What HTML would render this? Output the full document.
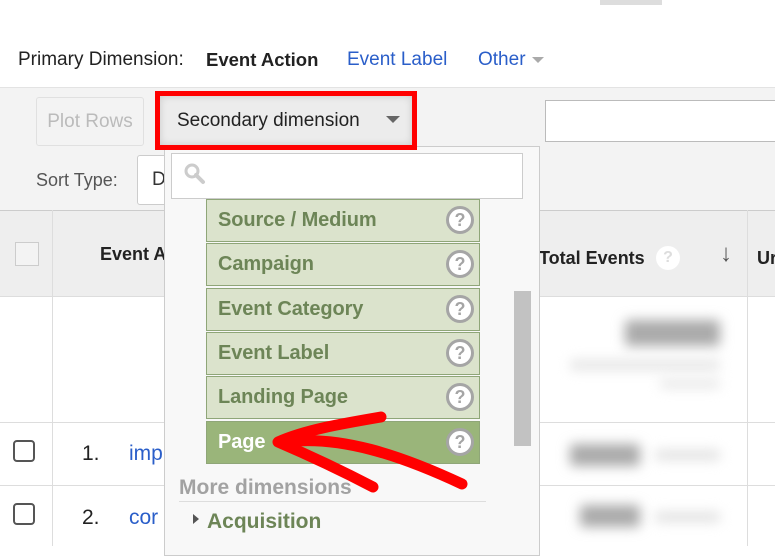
<!DOCTYPE html>
<html><head><style>
*{margin:0;padding:0;box-sizing:border-box}
body{width:775px;height:546px;overflow:hidden;background:#fff;font-family:"Liberation Sans",sans-serif;position:relative}
.a{position:absolute}
.item{position:absolute;left:206px;width:274px;height:43px;background:#dbe3cc;border:1px solid #8fa678;color:#6d8557;font-weight:bold;font-size:20px;line-height:41px;padding-left:11px;letter-spacing:-0.1px}
.q{position:absolute;right:5px;top:6px;width:28px;height:28px;border-radius:50%;border:3px solid #a5a5a5;background:#fff;color:#a5a5a5;font-size:18px;line-height:22px;text-align:center;font-weight:bold}
.blur{filter:blur(6px);background:#999;border-radius:3px}
</style></head><body>
<div class="a" style="left:600px;top:0;width:62px;height:5px;background:#ddd"></div>
<div class="a" style="left:18px;top:49px;font-size:19px;color:#222">Primary Dimension:</div>
<div class="a" style="left:206px;top:49px;font-size:18.5px;color:#222;font-weight:bold">Event Action</div>
<div class="a" style="left:347px;top:49px;font-size:19px;color:#2a5ec9">Event Label</div>
<div class="a" style="left:478px;top:49px;font-size:19px;color:#2a5ec9">Other</div>
<div class="a" style="left:532px;top:57px;border:6px solid transparent;border-top:6px solid #aaa"></div>
<div class="a" style="left:0;top:87px;width:775px;height:123px;background:#f3f3f3;border-top:1px solid #e3e3e3"></div>
<div class="a" style="left:36px;top:97px;width:108px;height:49px;border:1px solid #e0e0e0;border-radius:3px;background:#f3f3f3;color:#bbb;font-size:19px;line-height:47px;text-align:center">Plot Rows</div>
<div class="a" style="left:545px;top:100px;width:240px;height:42px;background:#fff;border:1px solid #bbb"></div>
<div class="a" style="left:36px;top:170px;font-size:18px;color:#555">Sort Type:</div>
<div class="a" style="left:137px;top:155px;width:40px;height:50px;background:#fff;border:1px solid #ccc;border-radius:3px;font-size:19px;color:#333;padding:13px 0 0 14px">D</div>
<div class="a" style="left:0;top:210px;width:775px;height:87px;background:#eeeeee;border-top:1px solid #ccc;border-bottom:1px solid #ddd"></div>
<div class="a" style="left:52px;top:210px;width:1px;height:336px;background:#ddd"></div>
<div class="a" style="left:747px;top:210px;width:1px;height:336px;background:#ddd"></div>
<div class="a" style="left:15px;top:242px;width:24px;height:24px;border:1px solid #ccc;background:#f3f3f3"></div>
<div class="a" style="left:100px;top:244px;font-size:18px;font-weight:bold;color:#222">Event A</div>
<div class="a" style="left:539px;top:248px;font-size:18px;font-weight:bold;color:#222">Total Events</div>
<div class="a" style="left:656px;top:246px;width:24px;height:24px;border-radius:50%;background:#fff;color:#ddd;font-size:16px;text-align:center;line-height:24px;font-weight:bold">?</div>
<div class="a" style="left:720px;top:240px;font-size:24px;color:#555;font-weight:bold">↓</div>
<div class="a" style="left:757px;top:248px;font-size:18px;font-weight:bold;color:#222">Ur</div>
<div class="a" style="left:0;top:422px;width:775px;height:1px;background:#ddd"></div>
<div class="a" style="left:0;top:485px;width:775px;height:1px;background:#ddd"></div>
<div class="a" style="left:13px;top:440px;width:22px;height:22px;border:2px solid #555;border-radius:4px"></div>
<div class="a" style="left:13px;top:503px;width:22px;height:22px;border:2px solid #555;border-radius:4px"></div>
<div class="a" style="left:82px;top:442px;font-size:21px;color:#222">1.</div>
<div class="a" style="left:82px;top:506px;font-size:21px;color:#222">2.</div>
<div class="a" style="left:129px;top:442px;font-size:21px;color:#2a5ec9">imp</div>
<div class="a" style="left:129px;top:506px;font-size:21px;color:#2a5ec9">cor</div>
<div class="a blur" style="left:625px;top:320px;width:95px;height:26px;background:#aaa"></div>
<div class="a blur" style="left:570px;top:360px;width:150px;height:10px;background:#e4e4e4"></div>
<div class="a blur" style="left:660px;top:380px;width:60px;height:8px;background:#e4e4e4"></div>
<div class="a blur" style="left:570px;top:444px;width:70px;height:22px;background:#aaa"></div>
<div class="a blur" style="left:655px;top:450px;width:65px;height:10px;background:#e0e0e0"></div>
<div class="a blur" style="left:580px;top:505px;width:60px;height:22px;background:#aaa"></div>
<div class="a blur" style="left:655px;top:512px;width:65px;height:10px;background:#e0e0e0"></div>
<div class="a" style="left:164px;top:146px;width:376px;height:410px;background:#f8f8f8;border:1px solid #ccc"></div>
<div class="a" style="left:171px;top:153px;width:352px;height:46px;background:#fff;border:1px solid #ccc"></div>
<svg class="a" style="left:182px;top:161px" width="26" height="26" viewBox="0 0 26 26"><circle cx="10" cy="10" r="6" fill="none" stroke="#ccc" stroke-width="3"/><line x1="14" y1="14" x2="21" y2="21" stroke="#ccc" stroke-width="4" stroke-linecap="round"/></svg>
<div class="item" style="top:199px">Source / Medium<div class="q">?</div></div>
<div class="item" style="top:243px">Campaign<div class="q">?</div></div>
<div class="item" style="top:288px">Event Category<div class="q">?</div></div>
<div class="item" style="top:332px">Event Label<div class="q">?</div></div>
<div class="item" style="top:376px">Landing Page<div class="q">?</div></div>
<div class="item" style="top:421px;background:#9ab57a;color:#fff">Page<div class="q">?</div></div>
<div class="a" style="left:514px;top:291px;width:17px;height:155px;background:#c2c2c2"></div>
<div class="a" style="left:179px;top:476px;font-size:21px;font-weight:bold;color:#a2a2a2">More dimensions</div>
<div class="a" style="left:179px;top:501px;width:307px;height:1px;background:#ddd"></div>
<div class="a" style="left:193px;top:514px;border:5px solid transparent;border-left:6px solid #555"></div>
<div class="a" style="left:207px;top:510px;font-size:21px;font-weight:bold;color:#6d8557">Acquisition</div>
<div class="a" style="left:155px;top:91px;width:262px;height:59px;border:5px solid #f00"></div>
<div class="a" style="left:160px;top:96px;width:252px;height:49px;background:#ececec;box-shadow:inset 0 0 8px rgba(0,0,0,.15)"></div>
<div class="a" style="left:177px;top:110px;font-size:19px;color:#222">Secondary dimension</div>
<div class="a" style="left:386px;top:116px;border:7px solid transparent;border-top:7px solid #666"></div>
<svg class="a" style="left:0;top:0" width="775" height="546"><g fill="none" stroke="#f00" stroke-width="11" stroke-linecap="round" stroke-linejoin="round"><path d="M381 417 C340 424 305 430 278 442 C320 460 350 475 373 487"/><path d="M285 442 C340 435 400 455 462 484"/></g></svg>
</body></html>
